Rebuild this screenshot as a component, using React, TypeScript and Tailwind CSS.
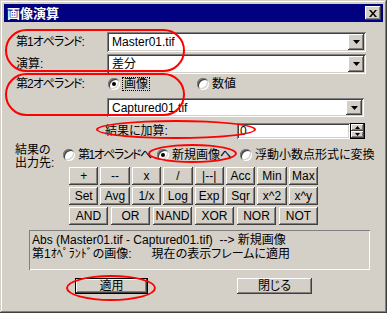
import React from "react";

const font = "font-['Liberation_Sans','Noto_Sans_CJK_JP',sans-serif] [font-feature-settings:'palt']";
const raised =
  "bg-[#d4d0c8] shadow-[inset_-1px_-1px_#404040,inset_1px_1px_#ffffff,inset_-2px_-2px_#808080]";
const sunken =
  "bg-white shadow-[inset_1px_1px_#808080,inset_-1px_-1px_#ffffff,inset_2px_2px_#404040,inset_-2px_-2px_#d4d0c8]";

function Arrow() {
  return (
    <svg width="7" height="4" viewBox="0 0 7 4">
      <path d="M0 0h7L3.5 4z" fill="#000" />
    </svg>
  );
}

function Combo({ value, w, h }: { value: string; w: string; h: string }) {
  return (
    <div className={`${sunken} ${w} ${h} flex items-center p-[2px]`}>
      <span className="flex-1 pl-[3px] text-[12px] leading-none">{value}</span>
      <span className={`${raised} w-[16px] h-full flex items-center justify-center`}>
        <Arrow />
      </span>
    </div>
  );
}

function Radio({ checked }: { checked?: boolean }) {
  return (
    <span className="relative w-[12px] h-[12px] shrink-0 rounded-full bg-white shadow-[inset_1px_1px_#808080,inset_-1px_-1px_#ffffff,inset_2px_2px_#404040,inset_-2px_-2px_#d4d0c8]">
      {checked && <span className="absolute left-[4px] top-[4px] w-[4px] h-[4px] rounded-full bg-black" />}
    </span>
  );
}

function Btn({ label }: { label: string }) {
  return (
    <div className={`${raised} h-[18px] flex items-center justify-center text-[12px] leading-none`}>
      {label}
    </div>
  );
}

const row1 = ["+", "--", "x", "/", "|--|", "Acc", "Min", "Max"];
const row2 = ["Set", "Avg", "1/x", "Log", "Exp", "Sqr", "x^2", "x^y"];
const row3 = ["AND", "OR", "NAND", "XOR", "NOR", "NOT"];

export default function App() {
  return (
    <div className={`w-[390px] h-[316px] bg-white ${font} text-black`}>
      <div className="relative w-[387px] h-[313px] bg-[#d4d0c8] p-[4px] shadow-[inset_-1px_-1px_#404040,inset_1px_1px_#d4d0c8,inset_-2px_-2px_#808080,inset_2px_2px_#ffffff]">
        {/* title bar */}
        <div className="h-[18px] bg-[#000080] flex items-center justify-between pl-[3px] pr-[2px]">
          <span className="text-white font-bold text-[13px] leading-none">画像演算</span>
          <span className={`${raised} w-[16px] h-[14px] flex items-center justify-center`}>
            <svg width="8" height="7" viewBox="0 0 8 7">
              <path d="M0 0h2l2 2.5L6 0h2L5 3.5 8 7H6L4 4.5 2 7H0l3-3.5z" fill="#000" />
            </svg>
          </span>
        </div>

        {/* operand 1 */}
        <div className="flex items-center mt-[10px] h-[20px]">
          <span className="w-[103px] pl-[12px] text-[12px] leading-none tracking-[-1px]">第1オペランド:</span>
          <Combo value="Master01.tif" w="w-[259px]" h="h-[20px]" />
        </div>
        <div className="flex items-center mt-[2px] h-[20px]">
          <span className="w-[103px] pl-[12px] text-[12px] leading-none">演算:</span>
          <Combo value="差分" w="w-[259px]" h="h-[20px]" />
        </div>

        {/* operand 2 */}
        <div className="flex items-center mt-[3px] h-[14px] text-[12px] leading-none">
          <span className="w-[104px] pl-[12px] tracking-[-1px]">第2オペランド:</span>
          <span className="w-[89px] flex items-center gap-[3px]">
            <Radio checked />
            <span className="px-[1px] outline-1 outline-dotted outline-black">画像</span>
          </span>
          <span className="flex items-center gap-[3px]">
            <Radio />
            <span>数値</span>
          </span>
        </div>
        <div className="mt-[7px] pl-[103px]">
          <Combo value="Captured01.tif" w="w-[257px]" h="h-[19px]" />
        </div>

        {/* add to result */}
        <div className="flex items-center mt-[6px] h-[16px] text-[12px] leading-none">
          <span className="w-[233px] pl-[101px]">結果に加算:</span>
          <div className={`${sunken} w-[113px] h-[16px] flex items-center pl-[3px]`}>0</div>
          <div className="w-[15px] h-[16px] flex flex-col border border-black">
            <span className={`${raised} flex-1 flex items-center justify-center`}>
              <svg width="5" height="3" viewBox="0 0 5 3"><path d="M0 3h5L2.5 0z" fill="#000" /></svg>
            </span>
            <span className={`${raised} flex-1 flex items-center justify-center`}>
              <svg width="5" height="3" viewBox="0 0 5 3"><path d="M0 0h5L2.5 3z" fill="#000" /></svg>
            </span>
          </div>
        </div>

        {/* output target */}
        <div className="flex mt-[5px]">
          <div className="w-[59px] pl-[11px] text-[12px] leading-[13px] flex flex-col">
            <span className="h-[13px]">結果の</span>
            <span className="h-[13px]">出力先:</span>
          </div>
          <div className="flex flex-col">
            <div className="flex items-center mt-[5px] h-[12px] text-[12px] leading-none whitespace-nowrap">
              <span className="w-[94px] flex items-center gap-[3px]">
                <Radio />
                <span className="tracking-[-1.5px]">第1オペランドへ</span>
              </span>
              <span className="w-[83px] flex items-center gap-[3px]">
                <Radio checked />
                <span>新規画像へ</span>
              </span>
              <span className="flex items-center gap-[3px]">
                <Radio />
                <span>浮動小数点形式に変換</span>
              </span>
            </div>
            <div className="ml-[6px] mt-[6px] w-[249px] flex flex-col gap-[2px]">
              <div className="grid grid-cols-8 gap-[2px]">
                {row1.map((l) => (
                  <Btn key={l} label={l} />
                ))}
              </div>
              <div className="grid grid-cols-8 gap-[2px]">
                {row2.map((l) => (
                  <Btn key={l} label={l} />
                ))}
              </div>
              <div className="grid grid-cols-6 gap-[3px]">
                {row3.map((l) => (
                  <Btn key={l} label={l} />
                ))}
              </div>
            </div>
          </div>
        </div>

        {/* description */}
        <div className="mt-[5px] ml-[25px] w-[341px] h-[40px] p-[2px] bg-[#d4d0c8] shadow-[inset_1px_1px_#808080,inset_-1px_-1px_#ffffff] text-[12px] leading-[14px] whitespace-pre">
          <div className="pl-[1px] pt-[1px]">Abs (Master01.tif - Captured01.tif)  --&gt; 新規画像</div>
          <div className="pl-[1px]">{"第1ｵﾍﾟﾗﾝﾄﾞの画像:      現在の表示フレームに適用"}</div>
        </div>

        {/* bottom buttons */}
        <div className="flex mt-[8px] text-[12px] leading-none">
          <div className="ml-[71px] w-[73px] h-[16px] border border-black">
            <div className={`${raised} h-full flex items-center justify-center`}>適用</div>
          </div>
          <div className={`${raised} ml-[89px] w-[75px] h-[16px] flex items-center justify-center`}>閉じる</div>
        </div>

        {/* red annotation marks */}
        <div className="absolute left-[5px] top-[29px] w-[180px] h-[43px] border-2 border-[#ff0000] rounded-[22px]" />
        <div className="absolute left-[5px] top-[73px] w-[180px] h-[43px] border-2 border-[#ff0000] rounded-[22px]" />
        <div className="absolute left-[96px] top-[120px] w-[160px] h-[19px] border-2 border-[#ff0000] rounded-[50%]" />
        <div className="absolute left-[148px] top-[144px] w-[89px] h-[19px] border-2 border-[#ff0000] rounded-[50%]" />
        <div className="absolute left-[66px] top-[275px] w-[90px] h-[26px] border-2 border-[#ff0000] rounded-[50%]" />
      </div>
    </div>
  );
}
